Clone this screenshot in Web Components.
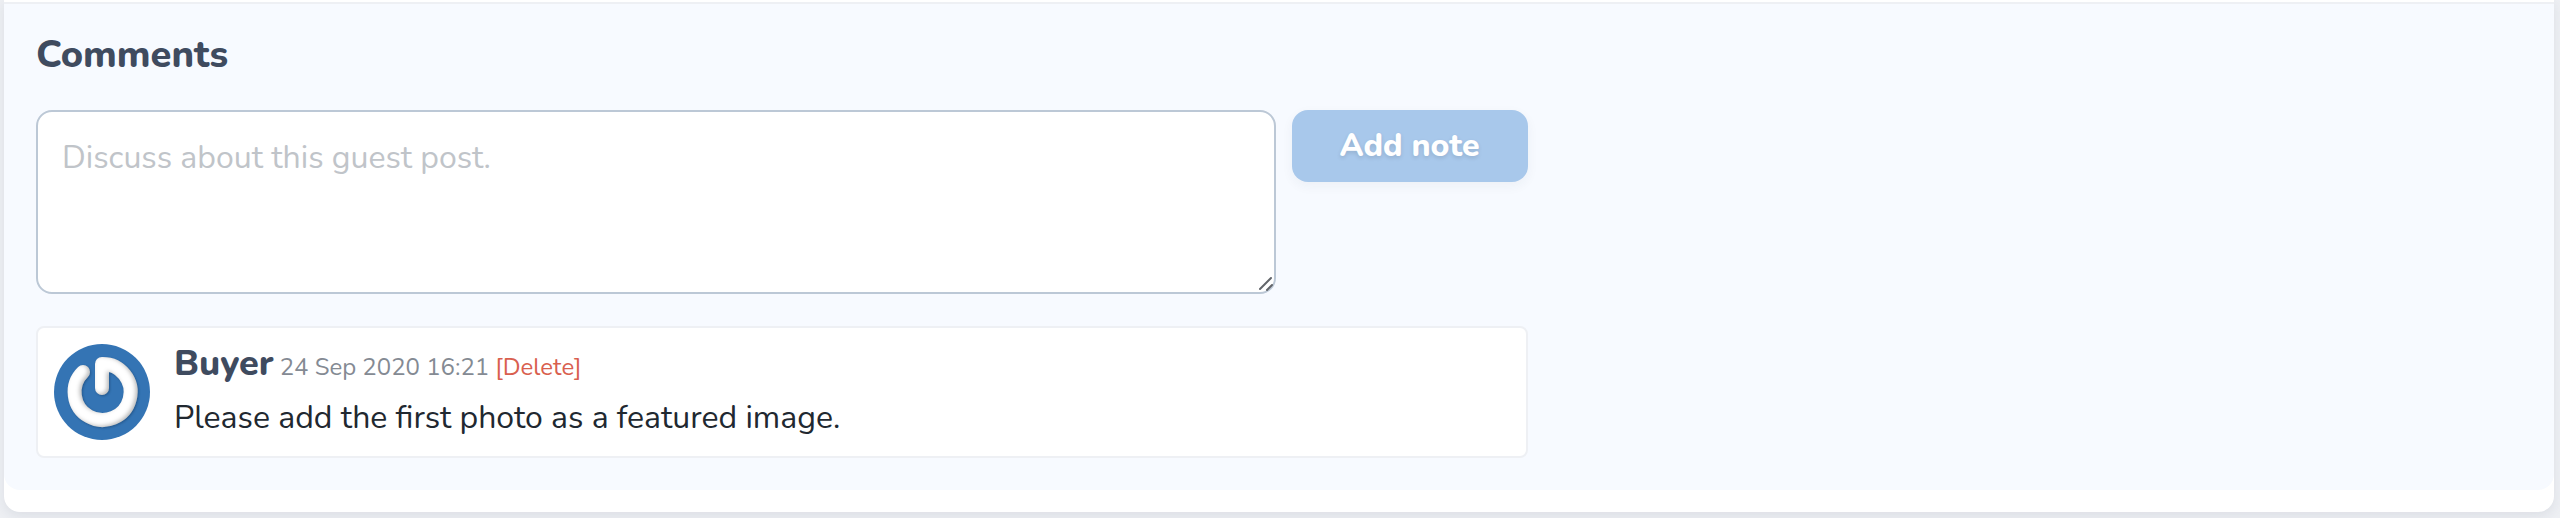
<!DOCTYPE html>
<html lang="en">
<head>
<meta charset="utf-8">
<title>Comments</title>
<style>
  body {
    margin: 0;
    background: #edeff3;
    color: #212830;
    font-family: Nunito, "Noto Sans", sans-serif;
    font-size: 32px;
    line-height: 48px;
  }
</style>
</head>
<body>
<post-card>
  <comments-section heading="Comments">
    <comment-form slot="form" placeholder="Discuss about this guest post." action="Add note"></comment-form>
    <comment-item author="Buyer" time="2020-09-24T16:21" date="24 Sep 2020 16:21">Please add the first photo as a featured image.</comment-item>
  </comments-section>
</post-card>

<script>
class BaseElement extends HTMLElement {
  constructor() {
    super();
    this.attachShadow({ mode: 'open' });
  }
  connectedCallback() {
    this.shadowRoot.innerHTML = this.render();
  }
  attr(name) {
    return this.getAttribute(name) || '';
  }
}

customElements.define('post-card', class extends BaseElement {
  render() {
    return `
      <style>
        :host {
          display: block;
          margin: 0 6px 6px 4px;
          padding: 2px 0 22px;
          background: #fff;
          border-radius: 0 0 16px 16px;
          box-shadow: 0 4px 12px rgba(40, 50, 80, .08);
        }
      </style>
      <slot></slot>`;
  }
});

customElements.define('comments-section', class extends BaseElement {
  render() {
    return `
      <style>
        :host {
          display: block;
          padding: 28px 32px 32px;
          background: #f7faff;
          border-top: 2px solid #eef0f4;
          border-radius: 0 0 16px 16px;
        }
        h2 {
          margin: 0 0 32px;
          color: #3f4b5f;
          font-size: 38px;
          font-weight: 800;
          line-height: 46px;
        }
        .column {
          display: flex;
          flex-direction: column;
          gap: 32px;
          width: 60%;
        }
      </style>
      <h2>${this.attr('heading')}</h2>
      <div class="column">
        <slot name="form"></slot>
        <slot></slot>
      </div>`;
  }
});

customElements.define('comment-form', class extends BaseElement {
  render() {
    return `
      <style>
        :host { display: block; }
        form {
          display: flex;
          align-items: flex-start;
          gap: 16px;
        }
        .field {
          position: relative;
          display: flex;
          flex: 1;
        }
        textarea {
          box-sizing: border-box;
          width: 100%;
          height: 184px;
          margin: 0;
          padding: 22px 24px;
          border: 2px solid #bcc8d6;
          border-radius: 16px;
          background: #fff;
          color: inherit;
          font: inherit;
          line-height: 48px;
          resize: none;
        }
        textarea::placeholder { color: #c0c4c9; opacity: 1; }
        .grip {
          position: absolute;
          right: 2px;
          bottom: 2px;
          width: 16px;
          height: 16px;
          pointer-events: none;
        }
        button {
          box-sizing: border-box;
          min-width: 236px;
          height: 72px;
          padding: 0 44px;
          border: 0;
          border-radius: 16px;
          background: #a8c8eb;
          box-shadow: 0 4px 12px rgba(40, 50, 80, .05);
          color: #fff;
          font: inherit;
          font-weight: 800;
          text-shadow: 0 2px 4px rgba(0, 0, 0, .12);
          white-space: nowrap;
        }
      </style>
      <form>
        <div class="field">
          <textarea aria-label="${this.attr('placeholder')}" placeholder="${this.attr('placeholder')}"></textarea>
          <svg class="grip" viewBox="0 0 16 16" fill="none" stroke="#62656a" stroke-width="2" stroke-linecap="round" aria-hidden="true">
            <path d="M2 13 13 2M9 14 14 9"/>
          </svg>
        </div>
        <button type="button">${this.attr('action')}</button>
      </form>`;
  }
});

customElements.define('user-avatar', class extends BaseElement {
  render() {
    return `
      <style>
        :host { display: block; flex: none; }
        svg { display: block; width: 96px; height: 96px; }
      </style>
      <svg viewBox="-48 -48 96 96" role="img" aria-label="Avatar">
        <defs>
          <filter id="relief" x="-30%" y="-30%" width="160%" height="160%" color-interpolation-filters="sRGB">
            <feGaussianBlur in="SourceAlpha" stdDeviation="2" result="soft"/>
            <feOffset in="soft" dx="-2" dy="-1" result="moved"/>
            <feComposite in="SourceAlpha" in2="moved" operator="out" result="edge"/>
            <feFlood flood-color="#000" flood-opacity=".28"/>
            <feComposite in2="edge" operator="in" result="shade"/>
            <feGaussianBlur in="SourceAlpha" stdDeviation="1" result="thin"/>
            <feOffset in="thin" dx="1" dy="1" result="below"/>
            <feFlood flood-color="#0d2f55" flood-opacity=".4"/>
            <feComposite in2="below" operator="in" result="drop"/>
            <feMerge>
              <feMergeNode in="drop"/>
              <feMergeNode in="SourceGraphic"/>
              <feMergeNode in="shade"/>
            </feMerge>
          </filter>
        </defs>
        <circle r="48" fill="#3474b4"/>
        <path d="M-19 -20A28 28 0 1 0 0 -28V-4" fill="none" stroke="#fff" stroke-width="14" stroke-linecap="round" stroke-linejoin="round" filter="url(#relief)"/>
      </svg>`;
  }
});

customElements.define('comment-item', class extends BaseElement {
  render() {
    return `
      <style>
        :host {
          display: flex;
          gap: 24px;
          padding: 16px;
          background: #fff;
          border: 2px solid #eef0f4;
          border-radius: 8px;
        }
        .body {
          display: flex;
          flex: 1;
          flex-direction: column;
          justify-content: space-between;
        }
        header {
          display: flex;
          align-items: baseline;
          gap: 6px;
          line-height: 32px;
        }
        p { margin: 0; line-height: 44px; }
        .author { color: #3f4b5f; font-size: 36px; font-weight: 800; line-height: 40px; }
        time { color: #848a93; font-size: 24px; }
        a { color: #d95f4f; font-size: 24px; text-decoration: none; }
      </style>
      <user-avatar></user-avatar>
      <div class="body">
        <header>
          <span class="author">${this.attr('author')}</span>
          <time datetime="${this.attr('time')}">${this.attr('date')}</time>
          <a href="#delete">[Delete]</a>
        </header>
        <p><slot></slot></p>
      </div>`;
  }
});
</script>
</body>
</html>
